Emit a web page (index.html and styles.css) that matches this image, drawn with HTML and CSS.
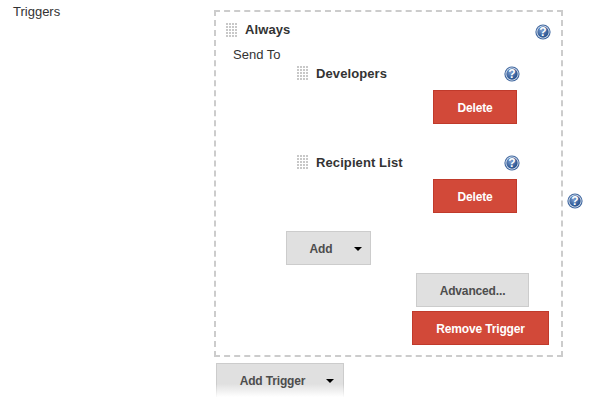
FILE: index.html
```html
<!DOCTYPE html>
<html lang="en">
<head>
<meta charset="utf-8">
<title>Triggers</title>
<link rel="stylesheet" href="styles.css">
</head>
<body>
<svg class="defs" width="0" height="0" aria-hidden="true">
  <defs>
    <radialGradient id="hg" cx="0.4" cy="0.35" r="0.75">
      <stop offset="0" stop-color="#7f9fd0"/>
      <stop offset="0.6" stop-color="#3c659f"/>
      <stop offset="1" stop-color="#204a87"/>
    </radialGradient>
    <g id="help">
      <circle cx="8" cy="8" r="7.6" fill="#3f679f"/>
      <circle cx="8" cy="8" r="6.5" fill="#e8eef6"/>
      <circle cx="8" cy="8" r="5.7" fill="url(#hg)"/>
      <text x="8" y="12.2" text-anchor="middle" class="q">?</text>
    </g>
    <pattern id="dots" width="3" height="3" patternUnits="userSpaceOnUse">
      <rect width="2" height="2" fill="#c8c8c8"/>
    </pattern>
  </defs>
</svg>
<main class="form">
  <div class="label">Triggers</div>
  <div class="fields">
    <section class="box">
      <div class="head">
        <svg class="handle" width="12" height="14"><rect width="12" height="14" fill="url(#dots)"/></svg>
        <b class="title">Always</b>
        <svg class="help" width="16" height="16"><use href="#help"/></svg>
      </div>
      <div class="sendto">Send To</div>
      <div class="recipient">
        <div class="head">
          <svg class="handle" width="12" height="14"><rect width="12" height="14" fill="url(#dots)"/></svg>
          <b class="title">Developers</b>
          <svg class="help" width="16" height="16"><use href="#help"/></svg>
        </div>
        <button class="btn red del">Delete</button>
      </div>
      <div class="recipient second">
        <div class="head">
          <svg class="handle" width="12" height="14"><rect width="12" height="14" fill="url(#dots)"/></svg>
          <b class="title">Recipient List</b>
          <svg class="help" width="16" height="16"><use href="#help"/></svg>
        </div>
        <button class="btn red del">Delete</button>
      </div>
      <button class="btn grey add">Add<span class="caret"></span></button>
      <button class="btn grey adv">Advanced...</button>
      <button class="btn red rem">Remove Trigger</button>
    </section>
    <div class="addtrigger">
      <button class="btn grey trig">Add Trigger<span class="caret"></span></button>
    </div>
  </div>
  <svg class="help outer" width="16" height="16"><use href="#help"/></svg>
</main>
</body>
</html>
```

FILE: styles.css
```css
html, body {
  margin: 0;
  height: 400px;
  overflow: hidden;
  background: #fff;
}
body {
  font-family: "Liberation Sans", Arial, sans-serif;
  font-size: 13px;
  color: #333;
}
.defs { display: block; height: 0; }
.q {
  font: bold 12px "Liberation Sans", Arial, sans-serif;
  fill: #fff;
}
.form {
  display: grid;
  grid-template-columns: 214px 349px 1fr;
  padding-top: 10px;
}
.label { padding: 0 0 0 13px; margin-top: -6px; line-height: 15px; }
.box {
  box-sizing: border-box;
  width: 349px;
  height: 347px;
  border: 2px dashed #ccc;
  display: flex;
  flex-direction: column;
  align-items: flex-start;
  padding: 10px 0 0 10px;
}
.head {
  display: flex;
  align-items: center;
  height: 16px;
}
.handle { flex: none; }
.title {
  font-size: 13px;
  letter-spacing: 0.1px;
  margin-left: 7px;
  line-height: 16px;
}
.box > .head { width: 325px; }
.box > .head .help { margin-left: auto; margin-top: 3px; margin-right: 0; }
.help { flex: none; display: block; }
.sendto { margin: 9px 0 0 7px; line-height: 15px; }
.recipient {
  margin: 3px 0 0 71px;
  width: 220px;
  display: flex;
  flex-direction: column;
}
.recipient .head { width: 223px; }
.recipient .title { margin-top: 2px; }
.recipient .help { margin-left: auto; margin-top: 2px; }
.recipient.second { margin-top: 30px; }
.btn {
  box-sizing: border-box;
  display: block;
  height: 34px;
  padding: 1px 0 0;
  border: 1px solid;
  border-radius: 0;
  font: bold 12px "Liberation Sans", Arial, sans-serif;
  letter-spacing: -0.15px;
  text-align: center;
}
.red { background: #d24939; border-color: #c03a2b; color: #fff; }
.grey { background: #e0e0e0; border-color: #ccc; color: #4d4d4d; }
.del { width: 84px; margin: 9px 0 0 136px; }
.caret {
  display: inline-block;
  width: 0;
  height: 0;
  border: 4px solid transparent;
  border-top: 4px solid #000;
  border-bottom: 0;
  vertical-align: 2px;
}
.add { width: 85px; margin: 18px 0 0 60px; padding-right: 7px; }
.add .caret { margin-left: 22px; margin-right: -22px; }
.adv { width: 113px; margin: 8px 0 0 190px; }
.rem { width: 137px; margin: 4px 0 0 186px; }
.addtrigger { margin: 6px 0 0 2px; }
.trig {
  width: 128px;
  height: 34px;
  padding: 0 7px 0 0;
  border-bottom: 0;
  border-image: linear-gradient(#ccc 60%, #fff) 1;
  background: linear-gradient(#e0e0e0 60%, #fff);
}
.trig .caret { margin-left: 21px; margin-right: -21px; }
.outer { margin: 183px 0 0 4px; }
```
